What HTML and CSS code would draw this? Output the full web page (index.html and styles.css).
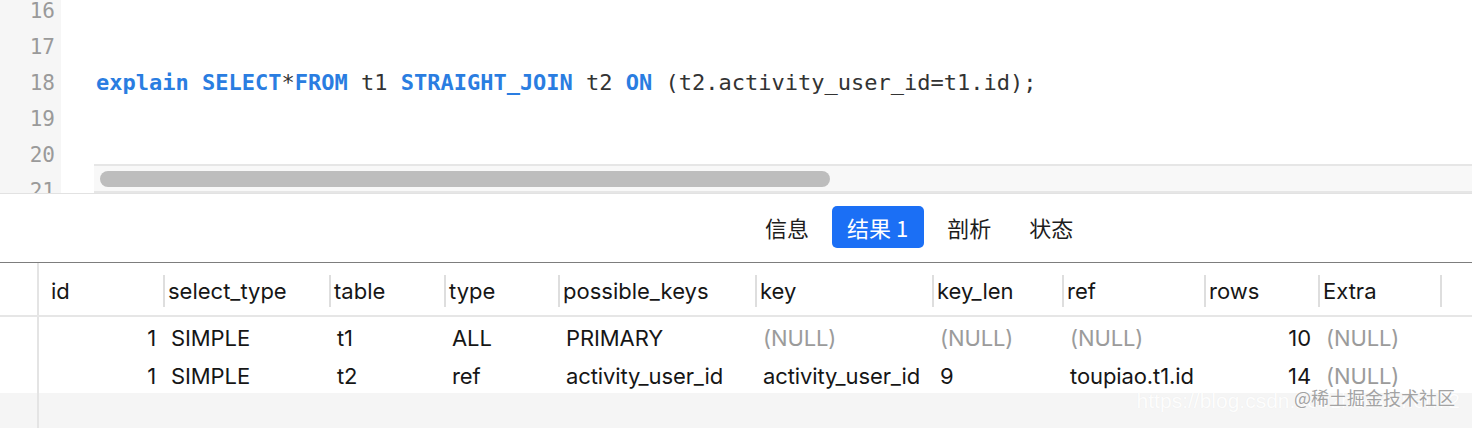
FILE: index.html
```html
<!DOCTYPE html>
<html lang="zh-CN">
<head>
<meta charset="utf-8">
<title>explain</title>
<link rel="stylesheet" href="styles.css">
</head>
<body>
<div class="app">
  <section class="editor">
    <div class="gutter">
      <div class="gutter-inner">
        <div class="ln">16</div>
        <div class="ln">17</div>
        <div class="ln">18</div>
        <div class="ln">19</div>
        <div class="ln">20</div>
        <div class="ln">21</div>
      </div>
    </div>
    <div class="code">
      <div class="lines">
        <div class="lines-inner">
          <div class="cl"></div>
          <div class="cl"></div>
          <div class="cl"><span class="kw">explain</span> <span class="kw">SELECT</span>*<span class="kw">FROM</span> t1 <span class="kw">STRAIGHT_JOIN</span> t2 <span class="kw">ON</span> (t2.activity_user_id=t1.id);</div>
          <div class="cl"></div>
          <div class="cl"></div>
        </div>
      </div>
      <div class="hscroll"><div class="thumb"></div></div>
    </div>
  </section>

  <nav class="tabs">
    <div class="tab">信息</div>
    <div class="tab active">结果 1</div>
    <div class="tab">剖析</div>
    <div class="tab">状态</div>
  </nav>

  <section class="grid">
    <div class="row head">
      <div class="rn"></div>
      <div class="th first">id</div>
      <div class="th">select_type</div>
      <div class="th">table</div>
      <div class="th">type</div>
      <div class="th">possible_keys</div>
      <div class="th">key</div>
      <div class="th">key_len</div>
      <div class="th">ref</div>
      <div class="th">rows</div>
      <div class="th">Extra</div>
      <div class="th tail"></div>
    </div>
    <div class="row data">
      <div class="rn"></div>
      <div class="td num">1</div>
      <div class="td">SIMPLE</div>
      <div class="td">t1</div>
      <div class="td">ALL</div>
      <div class="td">PRIMARY</div>
      <div class="td null">(NULL)</div>
      <div class="td null">(NULL)</div>
      <div class="td null">(NULL)</div>
      <div class="td num">10</div>
      <div class="td null">(NULL)</div>
      <div class="td"></div>
    </div>
    <div class="row data">
      <div class="rn"></div>
      <div class="td num">1</div>
      <div class="td">SIMPLE</div>
      <div class="td">t2</div>
      <div class="td">ref</div>
      <div class="td">activity_user_id</div>
      <div class="td">activity_user_id</div>
      <div class="td">9</div>
      <div class="td">toupiao.t1.id</div>
      <div class="td num">14</div>
      <div class="td null">(NULL)</div>
      <div class="td"></div>
    </div>
    <div class="filler">
      <div class="rn"></div>
    </div>
  </section>

  <div class="watermark">
    <span class="wm-url">https://blog.csdn.net/zhaoxichen72</span>
    <span class="wm-main">@稀土掘金技术社区</span>
  </div>
</div>
</body>
</html>
```

FILE: styles.css
```css
* { box-sizing: border-box; }

html, body {
  margin: 0;
  padding: 0;
  background: #ffffff;
}

.app {
  position: relative;
  width: 1472px;
  height: 428px;
  overflow: hidden;
  font-family: Inter, "Liberation Sans", "Noto Sans CJK SC", sans-serif;
}

/* ---------- editor ---------- */
.editor {
  display: flex;
  height: 194px;
  border-bottom: 1px solid #e2e2e2;
}

.gutter {
  width: 61px;
  background: #f6f6f6;
  overflow: hidden;
}

.gutter-inner {
  margin-top: -7px;
}

.ln {
  height: 36px;
  line-height: 36px;
  text-align: right;
  padding-right: 6px;
  font-family: "DejaVu Sans Mono", monospace;
  font-size: 21px;
  color: #9a9a9a;
}

.code {
  flex: 1;
  display: flex;
  flex-direction: column;
  min-width: 0;
}

.lines {
  height: 164px;
  overflow: hidden;
}

.lines-inner {
  margin-top: -7px;
  padding-left: 35px;
}

.cl {
  height: 36px;
  line-height: 36px;
  font-family: "DejaVu Sans Mono", monospace;
  font-size: 22px;
  color: #333333;
  white-space: pre;
}

.kw {
  color: #2a7de1;
  font-weight: bold;
}

.hscroll {
  margin-left: 33px;
  height: 29px;
  background: #f8f8f8;
  border-top: 2px solid #e6e6e6;
  border-bottom: 2px solid #e6e6e6;
  padding: 5px 0 0 6px;
}

.thumb {
  width: 730px;
  height: 16px;
  border-radius: 8px;
  background: #bdbdbd;
}

/* ---------- tabs ---------- */
.tabs {
  display: flex;
  align-items: center;
  gap: 8px;
  height: 69px;
  padding-left: 750px;
  padding-bottom: 2px;
  border-bottom: 1px solid #7d7d7d;
}

.tab {
  height: 42px;
  line-height: 42px;
  padding: 0 15px;
  border-radius: 5px;
  font-family: "Noto Sans CJK SC", sans-serif;
  font-size: 22px;
  color: #1d1d1d;
}

.tab.active {
  background: #1b6ff5;
  color: #ffffff;
  padding: 0 16px 0 15px;
}

/* ---------- grid ---------- */
.grid {
  display: flex;
  flex-direction: column;
}

.row {
  display: grid;
  grid-template-columns: 39px 124px 166px 115px 114px 197px 177px 130px 142px 114px 122px 1fr;
  align-items: center;
}

.rn {
  align-self: stretch;
  border-right: 2px solid #e4e4e4;
}

.head {
  height: 54px;
  padding-top: 3px;
  border-bottom: 2px solid #e6e6e6;
}

.th {
  height: 32px;
  line-height: 32px;
  padding-left: 3px;
  border-left: 2px solid #dedede;
  font-size: 22px;
  color: #161616;
  white-space: nowrap;
}

.th.first {
  border-left: 0;
  padding-left: 12px;
}

.head .rn {
  margin-top: -3px;
}

.data {
  height: 38px;
  padding-top: 3px;
}

.data .rn {
  margin-top: -3px;
}

.td {
  padding-left: 8px;
  font-size: 22px;
  letter-spacing: -0.1px;
  color: #161616;
  white-space: nowrap;
  overflow: visible;
}

.td.num {
  text-align: right;
  padding-left: 0;
  padding-right: 7px;
}

.td.null {
  color: #9b9b9b;
}

.filler {
  height: 40px;
  background: #f5f5f5;
  display: flex;
}

.filler .rn {
  width: 39px;
}

/* ---------- watermark ---------- */
.watermark {
  position: absolute;
  right: 12px;
  top: 384px;
  width: 270px;
  height: 30px;
}

.wm-url {
  position: absolute;
  right: 0;
  top: 5px;
  font-family: "Liberation Sans", sans-serif;
  font-size: 21px;
  color: rgba(255, 255, 255, 0.95);
  text-shadow: 0 0 1px rgba(0, 0, 0, 0.06);
  white-space: nowrap;
}

.wm-main {
  position: absolute;
  right: 5px;
  top: 0;
  font-family: "Noto Sans CJK SC", sans-serif;
  font-size: 18px;
  color: #a3a3a3;
  text-shadow: 0 0 2px #ffffff, 0 0 1px #ffffff;
  white-space: nowrap;
}
```
